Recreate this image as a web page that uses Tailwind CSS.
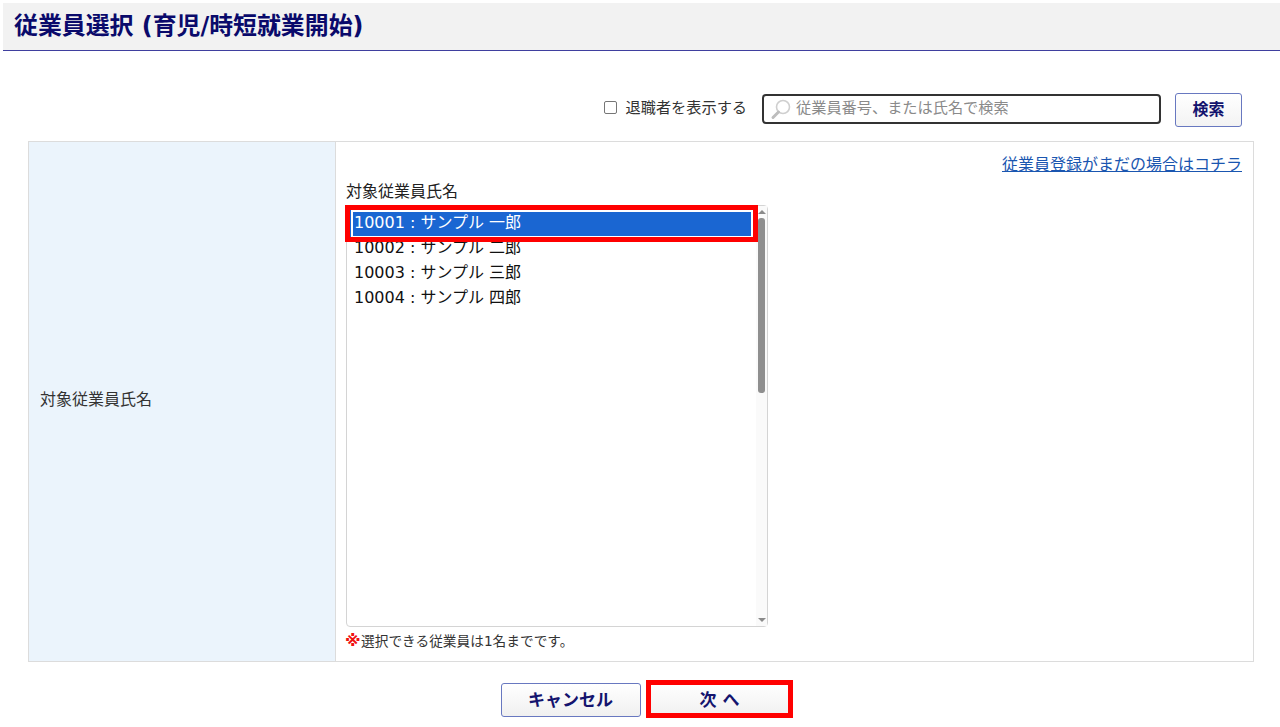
<!DOCTYPE html>
<html lang="ja">
<head>
  <meta charset="UTF-8" />
  <title>従業員選択</title>
  <script src="https://cdn.jsdelivr.net/npm/@tailwindcss/browser@4"></script>
</head>
<body class="bg-white text-[#222] font-['DejaVu_Sans','Noto_Sans_CJK_JP',sans-serif] h-[727px] overflow-hidden">
  <div class="pt-[3px] pl-[3px]">
    <!-- タイトル -->
    <h1 class="h-[48px] bg-[#f2f2f2] border-b border-[#3f3f9f] pl-[11px] pb-[2px] flex items-center text-[23.9px] leading-[30px] font-bold text-[#0a0a6b]">従業員選択 (育児/時短就業開始)</h1>
  </div>

  <div class="pl-[28px] pr-[26px]">
    <!-- 検索 -->
    <div class="h-[90px] flex items-end justify-end pb-[17px] pr-[12px]">
      <label class="flex items-center text-[15.2px] leading-[24px] text-[#333] h-[30px] pb-[2px] mr-[15px]">
        <span class="w-[13px] h-[13px] border border-[#767676] rounded-[2px] bg-white mr-[9px] mb-[2px]"></span>退職者を表示する
      </label>
      <div class="w-[399px] h-[30px] border-2 border-[#333] rounded-[4px] flex items-center pl-[6px] pb-[2px] text-[15.2px] leading-[24px] text-[#8a8a8a] mr-[14px]">
        <svg width="22" height="22" viewBox="0 0 22 22" fill="none" class="mr-[4px] mt-[2px]">
          <circle cx="13" cy="9" r="6.5" stroke="#cfcfcf" stroke-width="1.6"/>
          <path d="M8.5 14 L3 19.5" stroke="#bdbdbd" stroke-width="3" stroke-linecap="round"/>
        </svg>
        従業員番号、または氏名で検索
      </div>
      <button class="w-[67px] h-[34px] border border-[#6878c0] rounded-[3px] bg-gradient-to-b from-white to-[#f3f3f3] text-[16px] leading-[24px] font-bold text-[#14146e] mb-[-3px]">検索</button>
    </div>

    <!-- フォーム -->
    <div class="flex h-[521px] border border-[#dcdcdc]">
      <div class="w-[307px] bg-[#ebf4fc] border-r border-[#dcdcdc] flex items-center pl-[11px] pb-[4px] text-[16px] leading-[24px] text-[#333]">対象従業員氏名</div>
      <div class="flex-1 pl-[10px] pr-[11px] relative">
        <div class="h-[37px] flex items-start justify-end pt-[11px]">
          <a href="#" class="text-[16px] leading-[24px] text-[#1a56b0] underline">従業員登録がまだの場合はコチラ</a>
        </div>
        <div class="h-[26px] text-[16px] leading-[26px] text-[#222]">対象従業員氏名</div>
        <!-- リスト -->
        <div class="relative w-[422px] h-[422px] border border-[#d4d4d4] rounded-[4px] pl-[4px] pt-[4px] text-[16px] text-[#111]">
          <div class="w-[402px] h-[28px] bg-[#1a66d2] border-2 border-white outline outline-1 outline-[#1a66d2] text-white pl-[1px] leading-[21px]">10001 : サンプル 一郎</div>
          <div class="pl-[3px] h-[25px] leading-[25px] mt-[-3px]">10002 : サンプル 二郎</div>
          <div class="pl-[3px] h-[25px] leading-[25px]">10003 : サンプル 三郎</div>
          <div class="pl-[3px] h-[25px] leading-[25px]">10004 : サンプル 四郎</div>
          <!-- スクロールバー -->
          <div class="absolute right-0 top-0 bottom-0 w-[11px] bg-[#fafafa] flex flex-col items-center justify-between py-[4px]">
            <div class="w-0 h-0 border-x-[4px] border-x-transparent border-b-[4px] border-b-[#8a8a8a]"></div>
            <div class="absolute top-[12px] left-[2px] w-[7px] h-[175px] rounded-[3px] bg-[#8f8f8f]"></div>
            <div class="w-0 h-0 border-x-[4px] border-x-transparent border-t-[4px] border-t-[#8a8a8a]"></div>
          </div>
        </div>
        <p class="mt-[4px] text-[13.7px] leading-[20px] text-[#333] flex items-center"><span class="text-[#f01010] text-[16px] leading-[20px] font-bold w-[16px] ml-[-1px]">※</span>選択できる従業員は1名までです。</p>
        <!-- 強調枠 -->
        <div class="absolute left-[9px] top-[63px] w-[413px] h-[37px] border-[5px] border-[#ff0000]"></div>
      </div>
    </div>

    <!-- ボタン -->
    <div class="flex justify-center gap-[9px] mt-[21px] pl-[8px]">
      <button class="w-[140px] h-[34px] border border-[#6878c0] rounded-[3px] bg-gradient-to-b from-white to-[#f0f0f0] text-[17px] leading-[24px] font-bold text-[#14146e]">キャンセル</button>
      <div class="relative">
        <button class="w-[140px] h-[34px] bg-gradient-to-b from-white to-[#f0f0f0] text-[17px] leading-[24px] font-bold text-[#14146e]">次 へ</button>
        <div class="absolute left-[-4px] top-[-3px] w-[147px] h-[38px] border-[5px] border-[#ff0000]"></div>
      </div>
    </div>
  </div>
</body>
</html>
